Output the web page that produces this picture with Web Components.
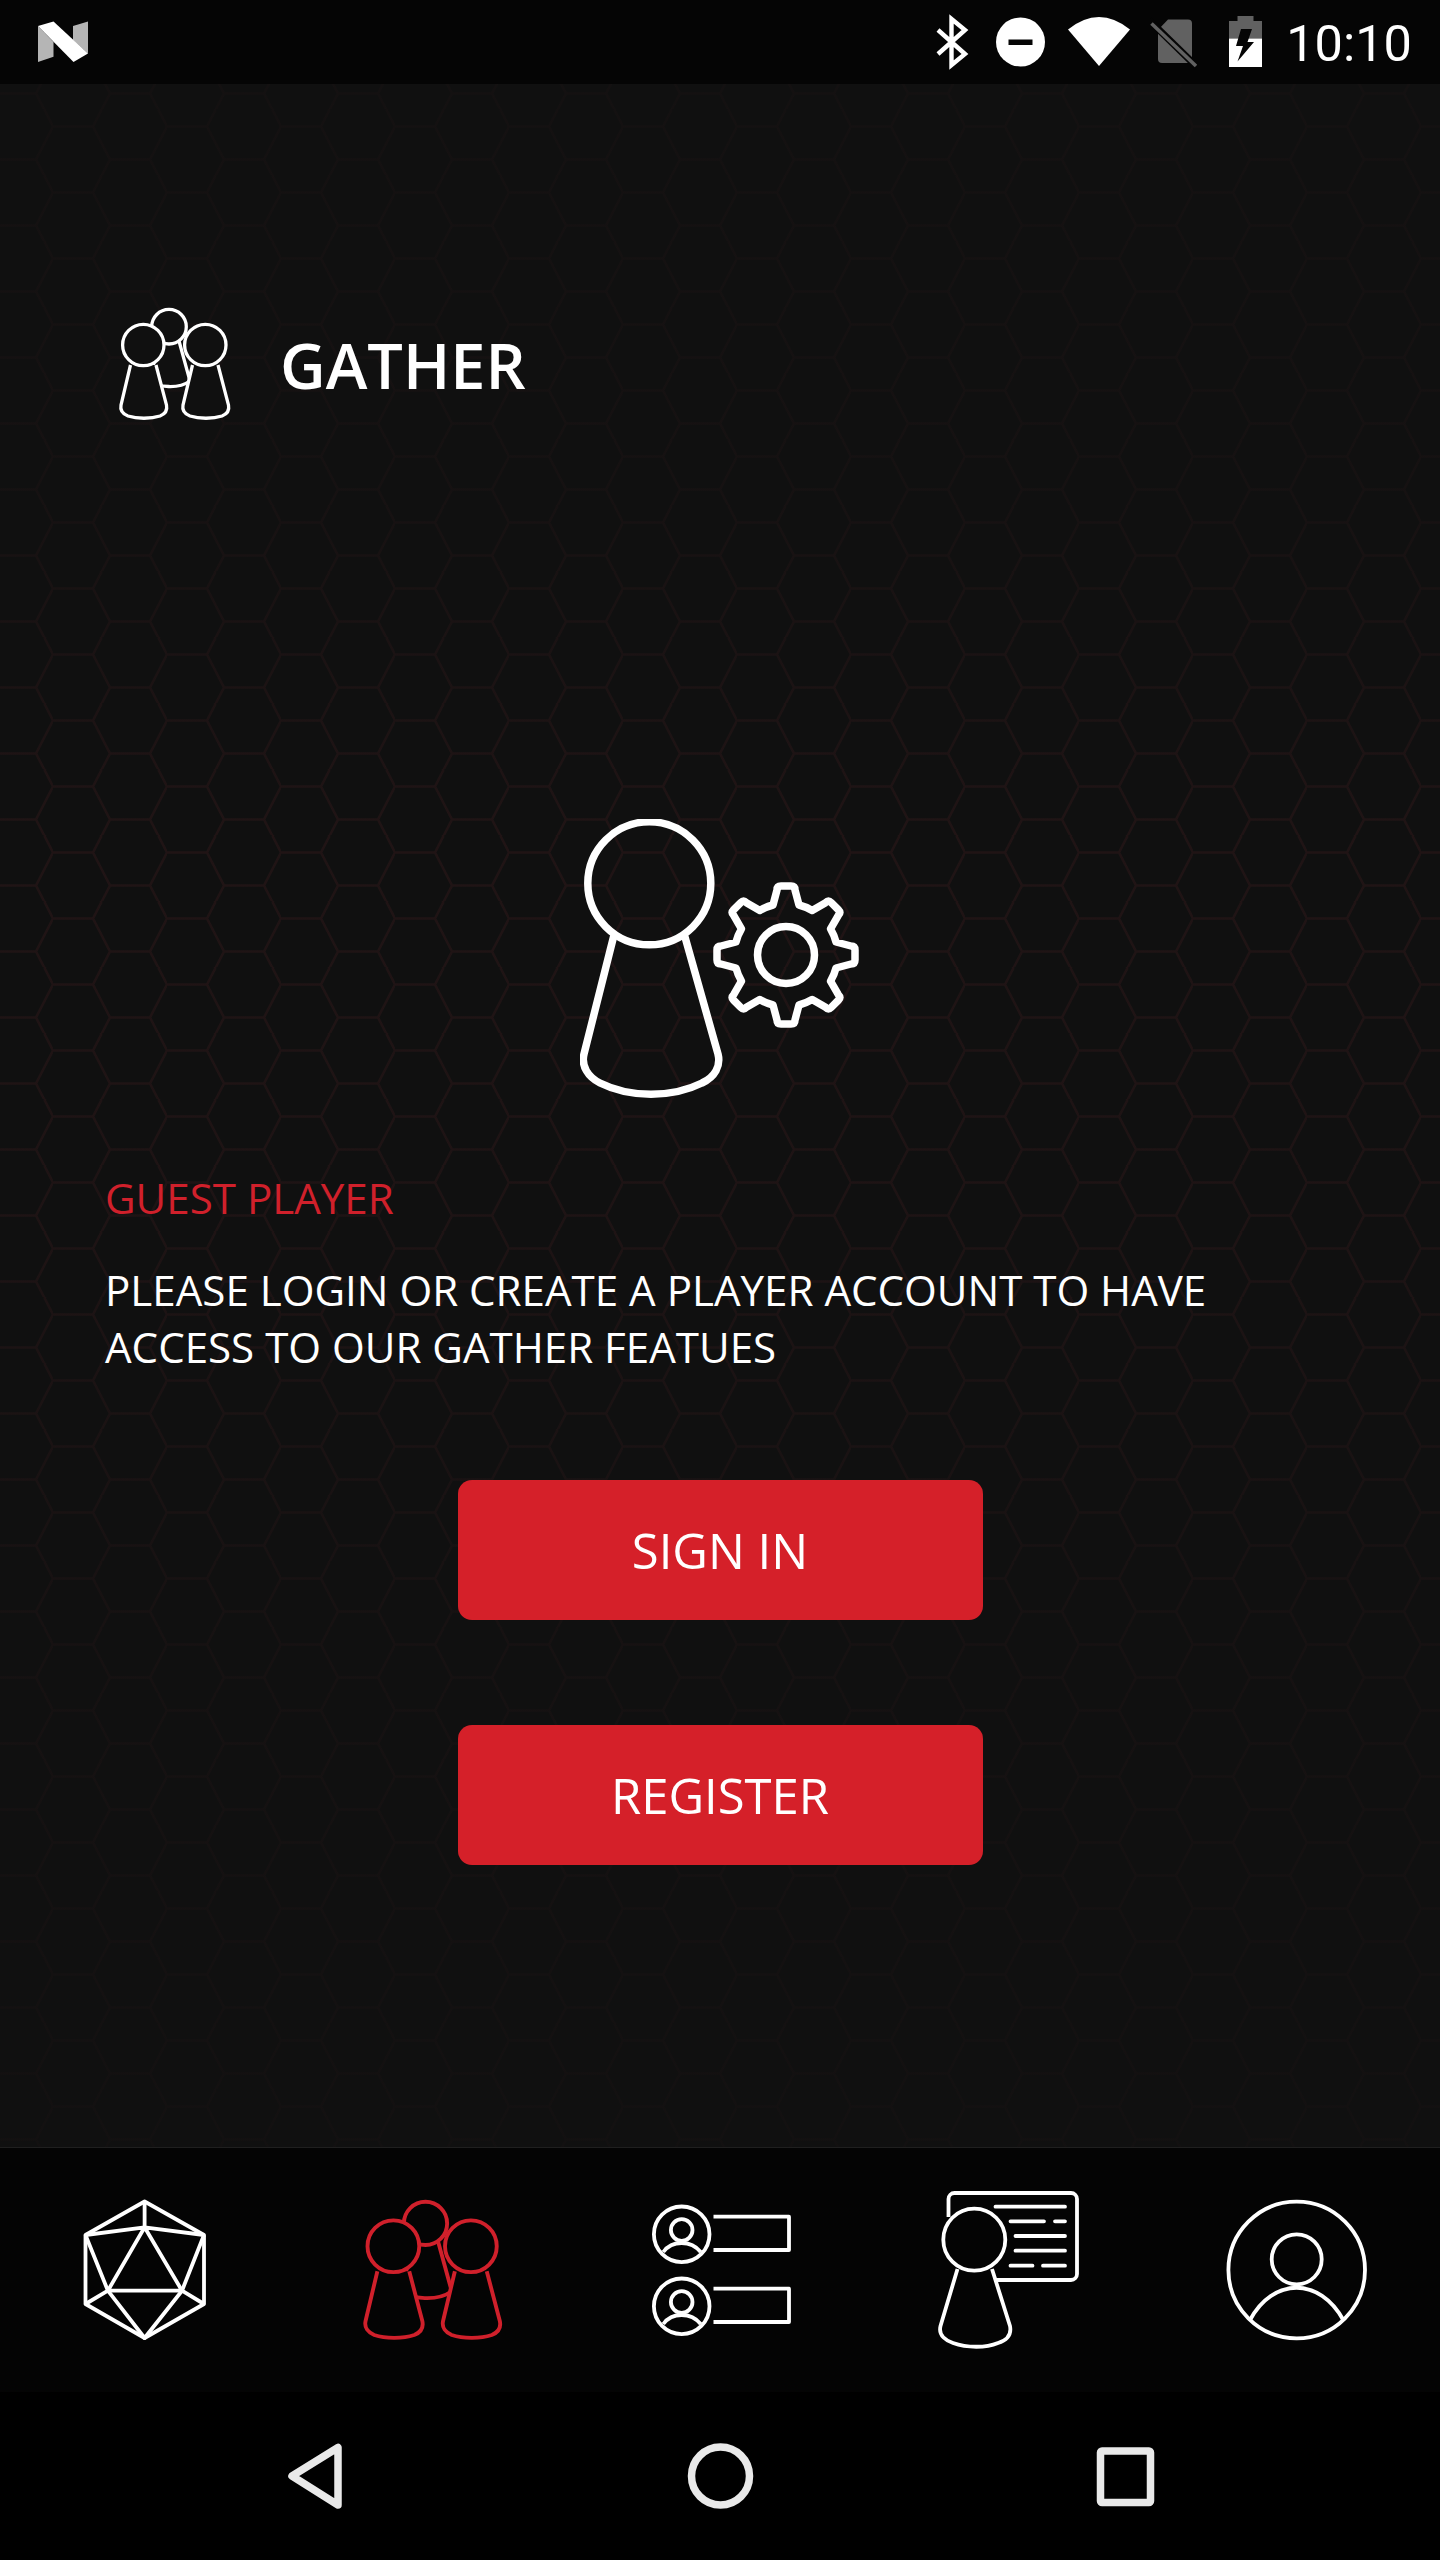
<!DOCTYPE html>
<html>
<head>
<meta charset="utf-8">
<style>
  html, body { margin: 0; padding: 0; background: #000; }
  body { width: 1440px; height: 2560px; display: flex; flex-direction: column; font-family: "Open Sans", "Liberation Sans", sans-serif; }
</style>
</head>
<body>
  <status-bar time="10:10"></status-bar>

  <hex-page>
    <app-header>GATHER</app-header>
    <guest-hero></guest-hero>
    <info-block heading="GUEST PLAYER">PLEASE LOGIN OR CREATE A PLAYER ACCOUNT TO HAVE<br>ACCESS TO OUR GATHER FEATUES</info-block>
    <red-button style="margin-top:105px">SIGN IN</red-button>
    <red-button style="margin-top:105px">REGISTER</red-button>
  </hex-page>

  <bottom-nav>
    <nav-icon name="dice" style="margin-left:85px"></nav-icon>
    <gather-icon size="140" stroke="3.1" color="#d0202b" fill="#040404" style="margin-left:158px"></gather-icon>
    <nav-icon name="list" style="margin-left:148.5px"></nav-icon>
    <nav-icon name="card" style="margin-left:148px"></nav-icon>
    <nav-icon name="profile" style="margin-left:146.5px"></nav-icon>
  </bottom-nav>

  <system-nav></system-nav>

<script>
class StatusBar extends HTMLElement {
  constructor() {
    super();
    this.shadowDOM = this.attachShadow({mode: 'open'});
  }

  connectedCallback() {
    this.render();
  }

  render() {
    this.shadowDOM.innerHTML = `
    <style>
      :host { display: flex; height: 84px; background: #050505; justify-content: space-between; flex: none; }
      .group { display: flex; }
      svg { display: block; height: 84px; flex: none; }
      span { font: 400 50.5px/84px Roboto, "Liberation Sans", sans-serif; color: #fff; margin-left: 24px; margin-right: 28px; position: relative; top: 2px; }
    </style>
    <svg width="52" viewBox="36 0 52 84" style="margin-left:36px">
      <path fill="#b5b5b5" d="M38 26 53.5 42V56.7L38 62Z"/>
      <path fill="#b5b5b5" d="M73 26 88 21.5V53.5L73 40Z"/>
      <path fill="#fff" d="M38 26 53.5 21.5 88 53.5 73.5 62Z"/>
    </svg>
    <div class="group">
      <svg width="34" viewBox="935 0 34 84">
        <path fill="none" stroke="#fff" stroke-width="4.4" d="M938 30 965 54 951.5 65V19L965 30 938 54"/>
      </svg>
      <svg width="49" viewBox="996 0 49 84" style="margin-left:27px">
        <circle cx="1020.5" cy="42" r="24.5" fill="#fff"/>
        <rect x="1008.5" y="39.5" width="24" height="5.5" fill="#050505"/>
      </svg>
      <svg width="62" viewBox="1068 0 62 84" style="margin-left:23px">
        <path fill="#fff" d="M1068 29.5Q1099 4.5 1130 29.5L1099 66Z"/>
      </svg>
      <svg width="47" viewBox="1150 0 47 84" style="margin-left:20px">
        <path fill="#616161" d="M1168 19.5H1188a4 4 0 0 1 4 4V63H1162a4 4 0 0 1-4-4V30Z"/>
        <path stroke="#050505" stroke-width="7" d="M1149 20 1197 67"/>
        <path stroke="#616161" stroke-width="3.6" d="M1151.5 23.5 1196 66"/>
      </svg>
      <svg width="33" viewBox="1229 0 33 84" style="margin-left:32px">
        <path fill="#616161" d="M1237.5 16H1253.5V21H1262V38.5H1229V21H1237.5Z"/>
        <rect x="1229" y="38.5" width="33" height="28.500" fill="#fff"/>
        <path fill="#050505" d="M1241 29H1252L1247.5 42H1254L1237.5 61.500 1243 46H1236Z"/>
      </svg>
      <span>${this.getAttribute('time')}</span>
    </div>
    `;
  }
}

// hexagon tile 114x66, the page background
const hexTile = encodeURIComponent(`<svg xmlns="http://www.w3.org/2000/svg" width="114" height="66"><path fill="none" stroke="#241516" stroke-width="2.500" d="M0 16.500H40L48.500 0M40 16.500 57 49.500H97L114 16.500M97 49.500 105.500 66M48.500 66 57 49.500M105.500 0 114 16.500"/></svg>`);

class HexPage extends HTMLElement {
  constructor() {
    super();
    this.shadowDOM = this.attachShadow({mode: 'open'});
  }

  connectedCallback() {
    this.shadowDOM.innerHTML = `
    <style>
      :host {
        display: flex;
        flex-direction: column;
        flex: none;
        height: 2063px;
        box-sizing: border-box;
        padding: 224px 0 0 0;
        background-color: #101010;
        background-image:
          linear-gradient(rgba(16,16,16,.8) 0, rgba(16,16,16,.7) 400px, rgba(16,16,16,.2) 750px, rgba(16,16,16,.3) 1150px, rgba(16,16,16,.7) 1600px, rgba(16,16,16,.85) 100%),
          url("data:image/svg+xml,${hexTile}");
        background-position: 0 0, 53px 25.500px;
      }
    </style>
    <slot></slot>
    `;
  }
}

class GatherIcon extends HTMLElement {
  constructor() {
    super();
    this.shadowDOM = this.attachShadow({mode: 'open'});
  }

  connectedCallback() {
    const size = this.getAttribute('size') || 112;
    const stroke = this.getAttribute('stroke') || 3;
    const color = this.getAttribute('color') || '#fff';
    const fill = this.getAttribute('fill') || '#101010';
    const body = 'M11.500 57 2 97C1 102 4 106 9 108 18 111 32 111 41 108 46 106 48.500 102 47.500 97L37 57';
    this.shadowDOM.innerHTML = `
    <style>
      :host { display: block; flex: none; width: ${size}px; height: ${size}px; }
      svg { display: block; width: 100%; height: 100%; overflow: visible; }
    </style>
    <svg viewBox="0 0 112 112" fill="${fill}" stroke="${color}" stroke-width="${stroke}">
      <path d="M40 33 31 72C38 80 60 81 71 73L60 33"/>
      <circle cx="50" cy="18.700" r="17.300"/>
      <path d="${body}"/>
      <circle cx="24.300" cy="37" r="20.700"/>
      <path d="${body}" transform="translate(62 0)"/>
      <circle cx="86.300" cy="37" r="20.700"/>
    </svg>
    `;
  }
}

class AppHeader extends HTMLElement {
  constructor() {
    super();
    this.shadowDOM = this.attachShadow({mode: 'open'});
  }

  connectedCallback() {
    this.shadowDOM.innerHTML = `
    <style>
      :host { display: flex; align-items: center; height: 112px; padding-left: 119px; }
      .title { margin-left: 49px; font: 600 63px/112px "Open Sans", sans-serif; color: #fff; position: relative; top: 1px; }
    </style>
    <gather-icon size="112" stroke="3.300" fill="#101010"></gather-icon>
    <div class="title"><slot></slot></div>
    `;
  }
}

class GuestHero extends HTMLElement {
  constructor() {
    super();
    this.shadowDOM = this.attachShadow({mode: 'open'});
  }

  gearPath() {
    const cx = 206, cy = 136;
    const root = 50, tip = 69, w1 = 13, w2 = 9, r = 4;
    let d = '';
    for (let i = 0; i < 8; i++) {
      const a = i * Math.PI / 4;
      const pt = (x, y) => {
        const px = cx + x * Math.cos(a) - y * Math.sin(a);
        const py = cy + x * Math.sin(a) + y * Math.cos(a);
        return px.toFixed(2) + ' ' + py.toFixed(2);
      };
      d += (i === 0 ? 'M' : `A${root} ${root} 0 0 1 `) + pt(-w1, -root);
      d += 'L' + pt(-w2, -tip + r) + 'Q' + pt(-w2, -tip) + ' ' + pt(-w2 + r, -tip);
      d += 'L' + pt(w2 - r, -tip) + 'Q' + pt(w2, -tip) + ' ' + pt(w2, -tip + r);
      d += 'L' + pt(w1, -root);
    }
    return d + `A${root} ${root} 0 0 1 ${cx - w1} ${cy - root}Z`;
  }

  connectedCallback() {
    this.shadowDOM.innerHTML = `
    <style>
      :host { display: flex; justify-content: center; margin-top: 399px; }
      svg { display: block; width: 280px; height: 280px; }
    </style>
    <svg viewBox="0 0 280 280" fill="none" stroke="#fff" stroke-width="7.500" stroke-linejoin="round" stroke-linecap="round">
      <circle cx="69.300" cy="64.300" r="61.500"/>
      <path d="M33.500 118 4 235C1 247 8 258 20 264 50 279 92 279 122 264 135 258 141 247 138 235L105 118"/>
      <circle cx="206" cy="136" r="28.500"/>
      <path d="${this.gearPath()}"/>
    </svg>
    `;
  }
}

class InfoBlock extends HTMLElement {
  constructor() {
    super();
    this.shadowDOM = this.attachShadow({mode: 'open'});
  }

  connectedCallback() {
    this.shadowDOM.innerHTML = `
    <style>
      :host { display: block; padding-left: 105px; margin-top: 70px; font: 400 42.1px/57px "Open Sans", sans-serif; color: #fff; }
      h2 { margin: 0 0 35px; font: inherit; color: #d0202b; }
    </style>
    <h2>${this.getAttribute('heading')}</h2>
    <div><slot></slot></div>
    `;
  }
}

class RedButton extends HTMLElement {
  constructor() {
    super();
    this.shadowDOM = this.attachShadow({mode: 'open'});
  }

  connectedCallback() {
    this.shadowDOM.innerHTML = `
    <style>
      :host { display: flex; flex: none; align-self: center; }
      button {
        width: 525px;
        height: 140px;
        border: none;
        border-radius: 14px;
        background: #d52029;
        color: #fff;
        font: 400 49px/1 "Open Sans", sans-serif;
        padding: 0;
      }
    </style>
    <button><slot></slot></button>
    `;
  }
}

class BottomNav extends HTMLElement {
  constructor() {
    super();
    this.shadowDOM = this.attachShadow({mode: 'open'});
  }

  connectedCallback() {
    this.shadowDOM.innerHTML = `
    <style>
      :host { display: flex; flex: none; align-items: center; height: 244px; background: #040404; border-top: 1px solid #1f1f1f; }
    </style>
    <slot></slot>
    `;
  }
}

// the nav icons are drawn with page-sized numbers taken from the design
const navIcons = {
  dice: {w: 120, h: 140, box: '85 2201 120 140', body: `
    <path d="M144.600 2202.500 204 2236V2305L144.600 2339 85.500 2305V2236Z"/>
    <path d="M144.600 2202.500V2228.300M85.500 2236 144.600 2228.300 204 2236M144.600 2228.300 107.900 2291.700H182L144.600 2228.300"/>
    <path d="M85.500 2236 107.900 2291.700 85.500 2305M204 2236 182 2291.700 204 2305M107.900 2291.700 144.600 2339 182 2291.700"/>`},
  list: {w: 138, h: 132, box: '652 2204 138 132', body: `
    <circle cx="681.700" cy="2234.300" r="27.800"/>
    <circle cx="681.700" cy="2230" r="10.800"/>
    <path d="M663.300 2252C672 2240 691 2240 700.700 2252"/>
    <path d="M713.500 2216.700H789V2250H713.500"/>
    <circle cx="681.700" cy="2306.300" r="27.800"/>
    <circle cx="681.700" cy="2302" r="10.800"/>
    <path d="M663.300 2324C672 2312 691 2312 700.700 2324"/>
    <path d="M713.500 2288.700H789V2322H713.500"/>`},
  card: {w: 142, h: 158, box: '937 2192 142 158', body: `
    <path d="M947.500 2218V2200a6 6 0 0 1 6-6H1070a6 6 0 0 1 6 6V2275a6 6 0 0 1-6 6H993"/>
    <circle cx="973.300" cy="2240.700" r="31"/>
    <path d="M956.500 2270 939.500 2327C937 2337 946 2342 952 2344 966 2349 985 2349 997 2344 1004 2342 1011 2337 1009 2327L991 2270"/>
    <path stroke-linecap="round" d="M994.500 2207.700H1064M1009.500 2222.300H1043M1054 2222.300H1064M1014.500 2237H1064M1014.500 2251.700H1064M1009.500 2266.700H1031.500M1042 2266.700H1064"/>`},
  profile: {w: 141, h: 141, box: '1226 2200 141 141', body: `
    <circle cx="1296.700" cy="2270" r="68.300"/>
    <circle cx="1296.700" cy="2259.300" r="25"/>
    <path d="M1250 2320C1273 2277 1320 2277 1343.300 2320"/>`}
};

class NavIcon extends HTMLElement {
  constructor() {
    super();
    this.shadowDOM = this.attachShadow({mode: 'open'});
  }

  connectedCallback() {
    const icon = navIcons[this.getAttribute('name')];
    this.shadowDOM.innerHTML = `
    <style>
      :host { display: block; flex: none; }
      svg { display: block; overflow: visible; }
    </style>
    <svg width="${icon.w}" height="${icon.h}" viewBox="${icon.box}" fill="none" stroke="#fff" stroke-width="3.800" stroke-linejoin="round">
      ${icon.body}
    </svg>
    `;
  }
}

class SystemNav extends HTMLElement {
  constructor() {
    super();
    this.shadowDOM = this.attachShadow({mode: 'open'});
  }

  connectedCallback() {
    this.shadowDOM.innerHTML = `
    <style>
      :host { display: block; flex: none; height: 168px; background: #000; }
      svg { display: block; }
    </style>
    <svg width="1440" height="168" viewBox="0 2392 1440 168" fill="none" stroke="#e9e9e9" stroke-width="7.500" stroke-linejoin="round">
      <path d="M338 2447.500V2505L292 2476Z"/>
      <circle cx="720.500" cy="2476" r="29"/>
      <rect x="1100.500" y="2451" width="50" height="51.500" rx="1.500"/>
    </svg>
    `;
  }
}

customElements.define('status-bar', StatusBar);
customElements.define('hex-page', HexPage);
customElements.define('gather-icon', GatherIcon);
customElements.define('app-header', AppHeader);
customElements.define('guest-hero', GuestHero);
customElements.define('info-block', InfoBlock);
customElements.define('red-button', RedButton);
customElements.define('bottom-nav', BottomNav);
customElements.define('nav-icon', NavIcon);
customElements.define('system-nav', SystemNav);
</script>
</body>
</html>
